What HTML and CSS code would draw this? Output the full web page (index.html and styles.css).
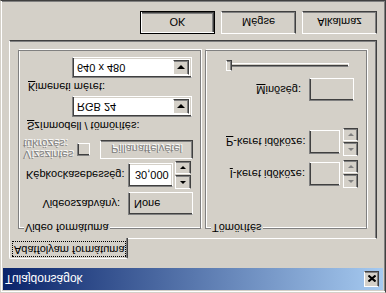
FILE: index.html
```html
<!DOCTYPE html>
<html lang="hu">
  <head>
    <meta charset="UTF-8" />
    <title>Tulajdonságok</title>
    <link rel="stylesheet" href="styles.css">
  </head>
  <body>
    <div class="window">
      <div class="titlebar">
        <span class="title">Tulajdonságok</span>
        <button class="close-btn">
          <svg width="8" height="7" viewBox="0 0 8 7">
            <path d="M0.5 0.5L7.5 6.5M7.5 0.5L0.5 6.5" stroke="#000" stroke-width="2" fill="none" />
          </svg>
        </button>
      </div>

      <div class="content">
        <div class="tabs">
          <div class="tab"><span class="focus">Adatfolyam formátuma</span></div>
        </div>

        <div class="panel">
          <!-- left group -->
          <div class="group video">
            <span class="legend">Video formátuma</span>

            <div class="row standard">
              <span class="lbl wide">Videoszabvány:</span>
              <div class="field static">None</div>
            </div>

            <div class="row fps">
              <span class="lbl wide">Képkockasebesség:</span>
              <div class="field edit">30,000</div>
              <div class="spin">
                <div class="spin-btn"><i class="arrow up"></i></div>
                <div class="spin-btn"><i class="arrow down"></i></div>
              </div>
            </div>

            <div class="row mirror">
              <span class="lbl disabled two-line">Vízszintes<br>tükrözés:</span>
              <div class="checkbox"></div>
              <button class="btn snap disabled">Pillanatfelvétel</button>
            </div>

            <div class="row caption"><span class="lbl"><u>S</u>zínmodell / tömörítés:</span></div>
            <div class="row">
              <div class="combo">
                <span class="value">RGB 24</span>
                <div class="drop"><i class="arrow down"></i></div>
              </div>
            </div>

            <div class="row caption size"><span class="lbl"><u>K</u>imeneti méret:</span></div>
            <div class="row">
              <div class="combo">
                <span class="value">640 x 480</span>
                <div class="drop"><i class="arrow down"></i></div>
              </div>
            </div>
          </div>

          <!-- right group -->
          <div class="group compress">
            <span class="legend">Tömörítés</span>

            <div class="row keyframe">
              <span class="lbl key"><u>I</u>-keret időköze:</span>
              <div class="field small"></div>
              <div class="spin narrow">
                <div class="spin-btn"><i class="arrow up off"></i></div>
                <div class="spin-btn"><i class="arrow down off"></i></div>
              </div>
            </div>

            <div class="row keyframe second">
              <span class="lbl key"><u>P</u>-keret időköze:</span>
              <div class="field small"></div>
              <div class="spin narrow">
                <div class="spin-btn"><i class="arrow up off"></i></div>
                <div class="spin-btn"><i class="arrow down off"></i></div>
              </div>
            </div>

            <div class="row quality">
              <span class="lbl q"><u>M</u>inőség:</span>
              <div class="field medium"></div>
            </div>

            <div class="row slider">
              <div class="track"></div>
              <div class="thumb"></div>
            </div>
          </div>
        </div>

        <div class="buttons">
          <button class="btn default">OK</button>
          <button class="btn">Mégse</button>
          <button class="btn">Alkalmaz</button>
        </div>
      </div>
    </div>
  </body>
</html>
```

FILE: styles.css
```css
* {
  box-sizing: border-box;
}

html,
body {
  margin: 0;
  padding: 0;
}

body {
  width: 386px;
  height: 293px;
  overflow: hidden;
  background: #d4d0c8;
  font-family: "Liberation Sans", Arial, sans-serif;
  font-size: 11px;
  color: #000;
}

/* the whole dialog is shown upside down */
.window {
  width: 386px;
  height: 293px;
  display: flex;
  flex-direction: column;
  background: #d4d0c8;
  border: 1px solid;
  border-color: #d4d0c8 #404040 #404040 #d4d0c8;
  box-shadow: inset 1px 1px #fff, inset -1px -1px #808080;
  padding: 2px;
  transform: scaleY(-1);
}

.titlebar {
  height: 22px;
  display: flex;
  align-items: center;
  justify-content: space-between;
  padding: 0 4px 0 2px;
  background: linear-gradient(to right, #0a246a, #a6caf0);
}

.title {
  color: #fff;
  font-size: 12px;
}

.close-btn {
  width: 15px;
  height: 16px;
  padding: 0;
  display: flex;
  align-items: center;
  justify-content: center;
  background: #d4d0c8;
  border: 1px solid;
  border-color: #fff #404040 #404040 #fff;
  box-shadow: inset -1px -1px #808080;
}

.content {
  padding: 9px 6px 0 6px;
}

.tabs {
  height: 20px;
  display: flex;
}

.tab {
  position: relative;
  z-index: 1;
  width: 119px;
  height: 21px;
  padding: 1px 2px;
  background: #d4d0c8;
  border: 1px solid;
  border-color: #fff #404040 transparent #fff;
  border-bottom: 0;
  border-radius: 2px 2px 0 0;
  box-shadow: inset -1px 0 #808080;
}

.focus {
  display: block;
  width: 114px;
  height: 16px;
  padding-left: 2px;
  line-height: 15px;
  outline: 1px dotted #000;
  outline-offset: -1px;
}

.panel {
  height: 199px;
  display: flex;
  gap: 4px;
  padding: 9px 0 0 8px;
  border: 1px solid;
  border-color: #fff #404040 #404040 #fff;
  box-shadow: inset -1px -1px #808080;
}

.group {
  position: relative;
  height: 179px;
  display: flex;
  flex-direction: column;
  border: 1px solid #808080;
  box-shadow: inset 1px 1px #fff, 1px 1px #fff;
}

.video {
  width: 183px;
  padding: 13px 7px 0 7px;
}

.compress {
  width: 162px;
  padding: 40px 0 0 20px;
}

.legend {
  position: absolute;
  top: -6px;
  left: 5px;
  padding: 0 1px;
  line-height: 13px;
  background: #d4d0c8;
}

.row {
  display: flex;
  align-items: center;
  flex-shrink: 0;
}

.lbl {
  line-height: 13px;
  white-space: nowrap;
}

.lbl.wide {
  width: 94px;
  text-align: right;
  flex-shrink: 0;
}

.disabled {
  color: #808080;
  text-shadow: 1px 1px #fff;
}

/* left group rows */
.standard {
  height: 23px;
}

.fps {
  height: 28px;
  margin-top: 3px;
}

.mirror {
  height: 19px;
  margin-top: 2px;
}

.caption {
  height: 13px;
  margin-top: 8px;
  padding-left: 1px;
}

.caption.size {
  margin-top: 3px;
  padding-left: 2px;
}

.caption + .row {
  margin-top: 2px;
}

.two-line {
  width: 51px;
  margin-left: -3px;
  line-height: 11px;
  flex-shrink: 0;
}

.field {
  flex-shrink: 0;
  border: 1px solid;
  border-color: #808080 #fff #fff #808080;
  box-shadow: inset 1px 1px #404040, inset -1px -1px #d4d0c8;
  background: #d4d0c8;
}

.field.static {
  width: 65px;
  height: 23px;
  margin-left: 8px;
  padding-left: 5px;
  line-height: 21px;
}

.field.edit {
  width: 45px;
  height: 24px;
  margin-left: 8px;
  padding-left: 6px;
  line-height: 22px;
  background: #fff;
}

.spin {
  width: 16px;
  height: 28px;
  margin-left: 2px;
  display: flex;
  flex-direction: column;
  gap: 1px;
}

.spin.narrow {
  width: 15px;
  margin-left: 3px;
}

.spin-btn {
  flex: 1;
  display: flex;
  align-items: center;
  justify-content: center;
  background: #d4d0c8;
  border: 1px solid;
  border-color: #fff #404040 #404040 #fff;
  box-shadow: inset -1px -1px #808080;
}

.arrow {
  width: 0;
  height: 0;
  border-left: 3px solid transparent;
  border-right: 3px solid transparent;
}

.arrow.up {
  border-bottom: 3px solid #000;
}

.arrow.down {
  border-top: 3px solid #000;
}

.arrow.up.off {
  border-bottom-color: #808080;
}

.arrow.down.off {
  border-top-color: #808080;
}

.checkbox {
  width: 13px;
  height: 13px;
  margin-left: 3px;
  flex-shrink: 0;
  border: 1px solid;
  border-color: #808080 #fff #fff #808080;
  box-shadow: inset 1px 1px #404040, inset -1px -1px #d4d0c8;
}

.combo {
  width: 120px;
  height: 21px;
  margin-left: 46px;
  display: flex;
  padding: 2px;
  background: #fff;
  border: 1px solid;
  border-color: #808080 #fff #fff #808080;
  box-shadow: inset 1px 1px #404040, inset -1px -1px #d4d0c8;
}

.combo .value {
  flex: 1;
  padding-left: 2px;
  line-height: 15px;
}

.drop {
  width: 16px;
  height: 15px;
  display: flex;
  align-items: center;
  justify-content: center;
  background: #d4d0c8;
  border: 1px solid;
  border-color: #fff #404040 #404040 #fff;
  box-shadow: inset -1px -1px #808080;
}

.drop .arrow {
  border-left-width: 4px;
  border-right-width: 4px;
  border-top-width: 4px;
}

/* right group rows */
.keyframe {
  height: 28px;
}

.keyframe.second {
  margin-top: 4px;
}

.lbl.key {
  width: 79px;
  text-align: right;
}

.field.small {
  width: 31px;
  height: 24px;
  margin-left: 4px;
}

.quality {
  height: 23px;
  margin-top: 27px;
}

.lbl.q {
  width: 75px;
  text-align: right;
}

.field.medium {
  width: 45px;
  height: 23px;
  margin-left: 8px;
}

.slider {
  position: relative;
  width: 123px;
  height: 11px;
  margin-top: 7px;
}

.track {
  width: 123px;
  height: 4px;
  border: 1px solid;
  border-color: #808080 #fff #fff #808080;
  box-shadow: inset 1px 1px #404040;
}

.thumb {
  position: absolute;
  left: 0;
  top: 0;
  width: 6px;
  height: 11px;
  background: #d4d0c8;
  border: 1px solid;
  border-color: #fff #404040 #404040 #fff;
  box-shadow: inset -1px -1px #808080;
}

/* dialog buttons */
.buttons {
  display: flex;
  justify-content: flex-end;
  gap: 6px;
  margin-top: 6px;
}

.btn {
  width: 75px;
  height: 23px;
  padding: 0;
  font: inherit;
  color: #000;
  background: #d4d0c8;
  border: 1px solid;
  border-color: #fff #404040 #404040 #fff;
  box-shadow: inset -1px -1px #808080;
}

.btn.default {
  border: 1px solid #000;
  box-shadow: inset 1px 1px #fff, inset -1px -1px #404040, inset -2px -2px #808080;
}

.btn.snap {
  width: 93px;
  height: 19px;
  margin-left: 10px;
  flex-shrink: 0;
  color: #808080;
}
```
